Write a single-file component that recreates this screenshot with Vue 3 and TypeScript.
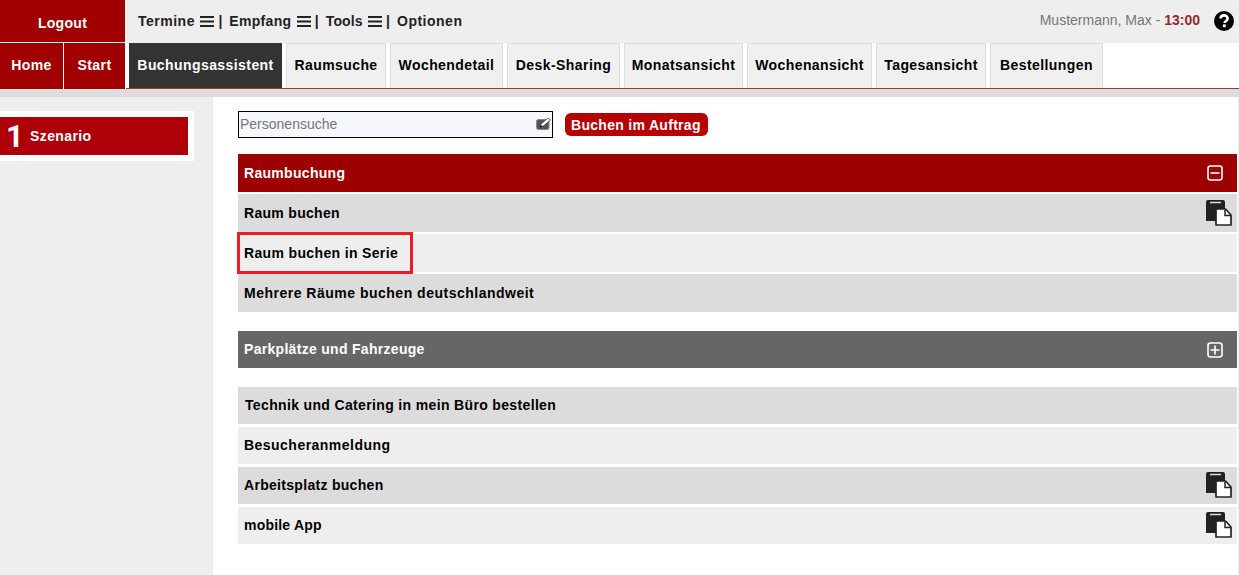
<script setup lang="ts">
const menus = [
  { label: 'Termine', ls: 0.5 },
  { label: 'Empfang', ls: 0.3 },
  { label: 'Tools', ls: 0.1 },
]
const tabs = [
  { label: 'Raumsuche', w: 100 },
  { label: 'Wochendetail', w: 113 },
  { label: 'Desk-Sharing', w: 113 },
  { label: 'Monatsansicht', w: 119 },
  { label: 'Wochenansicht', w: 125 },
  { label: 'Tagesansicht', w: 110 },
  { label: 'Bestellungen', w: 113 },
]
const groupA = [
  { label: 'Raum buchen', doc: true, tone: 'dark', ls: 0.3 },
  { label: 'Raum buchen in Serie', doc: false, tone: 'light', mark: true, ls: 0.35 },
  { label: 'Mehrere Räume buchen deutschlandweit', doc: false, tone: 'dark', ls: 0.5 },
]
const groupB = [
  { label: 'Technik und Catering in mein Büro bestellen', doc: false, tone: 'dark', shift: true, ls: 0.35 },
  { label: 'Besucheranmeldung', doc: false, tone: 'light', ls: 0.47 },
  { label: 'Arbeitsplatz buchen', doc: true, tone: 'dark', ls: 0.3 },
  { label: 'mobile App', doc: true, tone: 'light', ls: 0.2 },
]
</script>

<template>
  <div class="page">
    <header class="top">
      <div class="logout">Logout</div>
      <nav class="menus">
        <template v-for="m in menus" :key="m.label">
          <span class="menu" :style="{ letterSpacing: m.ls + 'px' }">{{ m.label }}</span>
          <svg class="burger" width="14" height="11" viewBox="0 0 14 11"><path d="M0 1h14M0 5.500h14M0 10h14" stroke="#222" stroke-width="2" /></svg>
          <span class="sep">|</span>
        </template>
        <span class="menu opt">Optionen</span>
      </nav>
      <div class="user">
        <span>Mustermann, Max - </span><b class="time">13:00</b>
        <svg class="help" width="20" height="20" viewBox="0 0 20 20">
          <circle cx="10" cy="10" r="10" fill="#000" />
          <path d="M6.600 7.600c0-2 1.500-3.200 3.500-3.200s3.500 1.200 3.500 3c0 2.600-3 2.500-3 4.500" fill="none" stroke="#fff" stroke-width="2.600" />
          <rect x="8.900" y="13.400" width="2.800" height="2.800" fill="#fff" />
        </svg>
      </div>
    </header>

    <nav class="tabs">
      <div class="home">Home</div>
      <div class="home start">Start</div>
      <div class="tab active">Buchungsassistent</div>
      <div v-for="t in tabs" :key="t.label" class="tab" :style="{ width: t.w + 'px' }">{{ t.label }}</div>
    </nav>
    <div class="band"></div>

    <div class="body">
      <aside class="side">
        <div class="step-wrap">
          <div class="step"><span class="num">1</span><span>Szenario</span></div>
        </div>
      </aside>
      <main class="main">
        <div class="search">
          <div class="input">
            <span>Personensuche</span>
            <svg width="16" height="13" viewBox="0 0 16 13">
              <rect x="0.500" y="2.500" width="12.500" height="10" rx="2" fill="#555" stroke="#888" />
              <path d="M4 10l1-3 7-6 2.500 2-7 6z" fill="#fff" stroke="#222" stroke-width="0.700" />
              <path d="M4 10l1-2 1.500 1.400z" fill="#000" />
            </svg>
          </div>
          <button class="order">Buchen im Auftrag</button>
        </div>

        <div class="head red">
          <span>Raumbuchung</span>
          <svg class="toggle" width="16" height="16" viewBox="0 0 16 16"><rect x="1" y="1" width="14" height="14" rx="2.500" fill="none" stroke="#fff" stroke-width="1.600" /><path d="M3.500 8h9" stroke="#fff" stroke-width="1.600" /></svg>
        </div>
        <div class="list">
          <div v-for="r in groupA" :key="r.label" class="row" :class="r.tone">
            <span class="label" :class="{ mark: r.mark }" :style="{ letterSpacing: r.ls + 'px' }">{{ r.label }}</span>
            <svg v-if="r.doc" class="doc" width="26" height="26" viewBox="0 0 26 26">
              <path d="M0 2q0-2 2-2h15q2 0 2 2v19H0z" fill="#222" />
              <path d="M4 2.500h11" stroke="#ddd" stroke-width="1.500" />
              <path d="M10 9h9.500l5.500 6v10H10z" fill="#fff" stroke="#222" stroke-width="1.700" stroke-linejoin="round" />
              <path d="M19 9.500v6h6" fill="none" stroke="#222" stroke-width="1.500" />
            </svg>
          </div>
        </div>

        <div class="head gray">
          <span>Parkplätze und Fahrzeuge</span>
          <svg class="toggle" width="16" height="16" viewBox="0 0 16 16"><rect x="1" y="1" width="14" height="14" rx="2.500" fill="none" stroke="#fff" stroke-width="1.600" /><path d="M3.500 8h9M8 3.500v9" stroke="#fff" stroke-width="1.600" /></svg>
        </div>

        <div class="list last">
          <div v-for="r in groupB" :key="r.label" class="row" :class="r.tone">
            <span class="label" :class="{ shift: r.shift }" :style="{ letterSpacing: r.ls + 'px' }">{{ r.label }}</span>
            <svg v-if="r.doc" class="doc" width="26" height="26" viewBox="0 0 26 26">
              <path d="M0 2q0-2 2-2h15q2 0 2 2v19H0z" fill="#222" />
              <path d="M4 2.500h11" stroke="#ddd" stroke-width="1.500" />
              <path d="M10 9h9.500l5.500 6v10H10z" fill="#fff" stroke="#222" stroke-width="1.700" stroke-linejoin="round" />
              <path d="M19 9.500v6h6" fill="none" stroke="#222" stroke-width="1.500" />
            </svg>
          </div>
        </div>
      </main>
    </div>
  </div>
</template>

<style>
html, body { margin: 0; background: #eee; }
</style>

<style scoped>
.page {
  width: 1239px;
  height: 575px;
  overflow: hidden;
  background: #eee;
  font-family: "Liberation Sans", Arial, sans-serif;
  font-size: 14px;
  color: #000;
}
.top {
  display: flex;
  align-items: stretch;
  height: 42px;
  background: #eee;
}
.logout {
  width: 125px;
  background: #a00000;
  color: #fff;
  font-weight: 700;
  text-align: center;
  line-height: 46px;
  letter-spacing: 0.3px;
}
.menus {
  display: flex;
  align-items: center;
  padding: 0 0 0 13px;
  color: #222;
  font-weight: 700;
  height: 42px;
}
.opt { letter-spacing: 0.5px; }
.burger { margin-left: 5.500px; margin-top: 1px; }
.sep { margin: 0 7px 0 4px; }
.user {
  margin-left: auto;
  display: flex;
  align-items: center;
  color: #777;
  white-space: pre;
  padding-right: 5px;
  height: 40px;
}
.time { color: #9a2a2a; }
.help { margin-left: 14px; margin-top: 2px; }
.tabs {
  display: flex;
  height: 45px;
  margin-top: 1px;
  border-bottom: 1px solid #a33;
  background: #fff;
  font-weight: 700;
  letter-spacing: 0.42px;
}
.home {
  width: 64px;
  background: #a00000;
  color: #fff;
  display: flex;
  align-items: center;
  justify-content: center;
  border-right: 1px solid #fff;
  box-sizing: border-box;
  height: 46px;
  padding-bottom: 2px;
}
.home.start { width: 62px; margin-right: 3px; }
.tab {
  box-sizing: border-box;
  margin-right: 4px;
  height: 45px;
  padding-bottom: 3px;
  display: flex;
  align-items: center;
  justify-content: center;
  background: #f0f0f0;
  border: 1px solid #ddd;
  border-bottom: 0;
  white-space: nowrap;
}
.tab.active {
  width: 153px;
  background: #333;
  color: #fff;
  border-color: #333;
}
.band { height: 8px; background: #ddd; }
.body { display: flex; height: 478px; }
.side { width: 213px; flex: none; padding-top: 14px; }
.step-wrap {
  width: 194px;
  height: 50px;
  box-sizing: border-box;
  background: #fff;
  padding: 6px 6px 6px 0;
}
.step {
  height: 38px;
  background: #ae0008;
  color: #fff;
  display: flex;
  align-items: center;
  font-weight: 700;
  letter-spacing: 0.4px;
}
.num {
  font-family: Roboto, "Liberation Sans", sans-serif;
  font-size: 31px;
  width: 30px;
  padding-left: 6px;
  box-sizing: border-box;
  letter-spacing: 0;
}
.main {
  flex: 1;
  background: #fff;
  padding: 14px 1px 0 25px;
  border-right: 1px solid #eee;
  box-sizing: border-box;
}
.search { display: flex; align-items: center; height: 27px; }
.input {
  width: 315px;
  height: 27px;
  box-sizing: border-box;
  border: 1px solid #000;
  background: #f5f7fc;
  color: #777;
  display: flex;
  align-items: center;
  justify-content: space-between;
  padding: 0 0 2px 1px;
}
.order {
  margin-left: 12px;
  height: 23px;
  padding: 0 7px 0 6px;
  border: 0;
  border-radius: 6px;
  background: #b80000;
  color: #fff;
  font: 700 14px "Liberation Sans", Arial, sans-serif;
  letter-spacing: 0.3px;
}
.head {
  display: flex;
  align-items: center;
  justify-content: space-between;
  color: #fff;
  font-weight: 700;
  padding: 0 14px 0 6px;
  letter-spacing: 0.3px;
}
.head.red { height: 38px; margin-top: 16px; background: #9c0000; }
.head.gray { height: 37px; padding-bottom: 1px; box-sizing: border-box; background: #666; }
.toggle { flex: none; }
.head.gray .toggle { margin-top: 1px; }
.list { display: flex; flex-direction: column; gap: 2px; padding: 2px 0 19px; }
.list.last { padding-top: 19px; gap: 3px; }
.row {
  height: 38px;
  display: flex;
  align-items: center;
  justify-content: space-between;
  padding: 0 5px 0 6px;
  font-weight: 700;
}
.list.last .row { height: 37px; box-sizing: border-box; padding-bottom: 1px; }
.row.dark { background: #dcdcdc; }
.row.light { background: #eee; }
.label { position: relative; }
.label.shift { margin-left: 1px; }
.label.mark::after {
  content: "";
  position: absolute;
  left: -7px;
  right: -15px;
  top: -13px;
  bottom: -13px;
  border: 3px solid #ed1c24;
}
</style>
